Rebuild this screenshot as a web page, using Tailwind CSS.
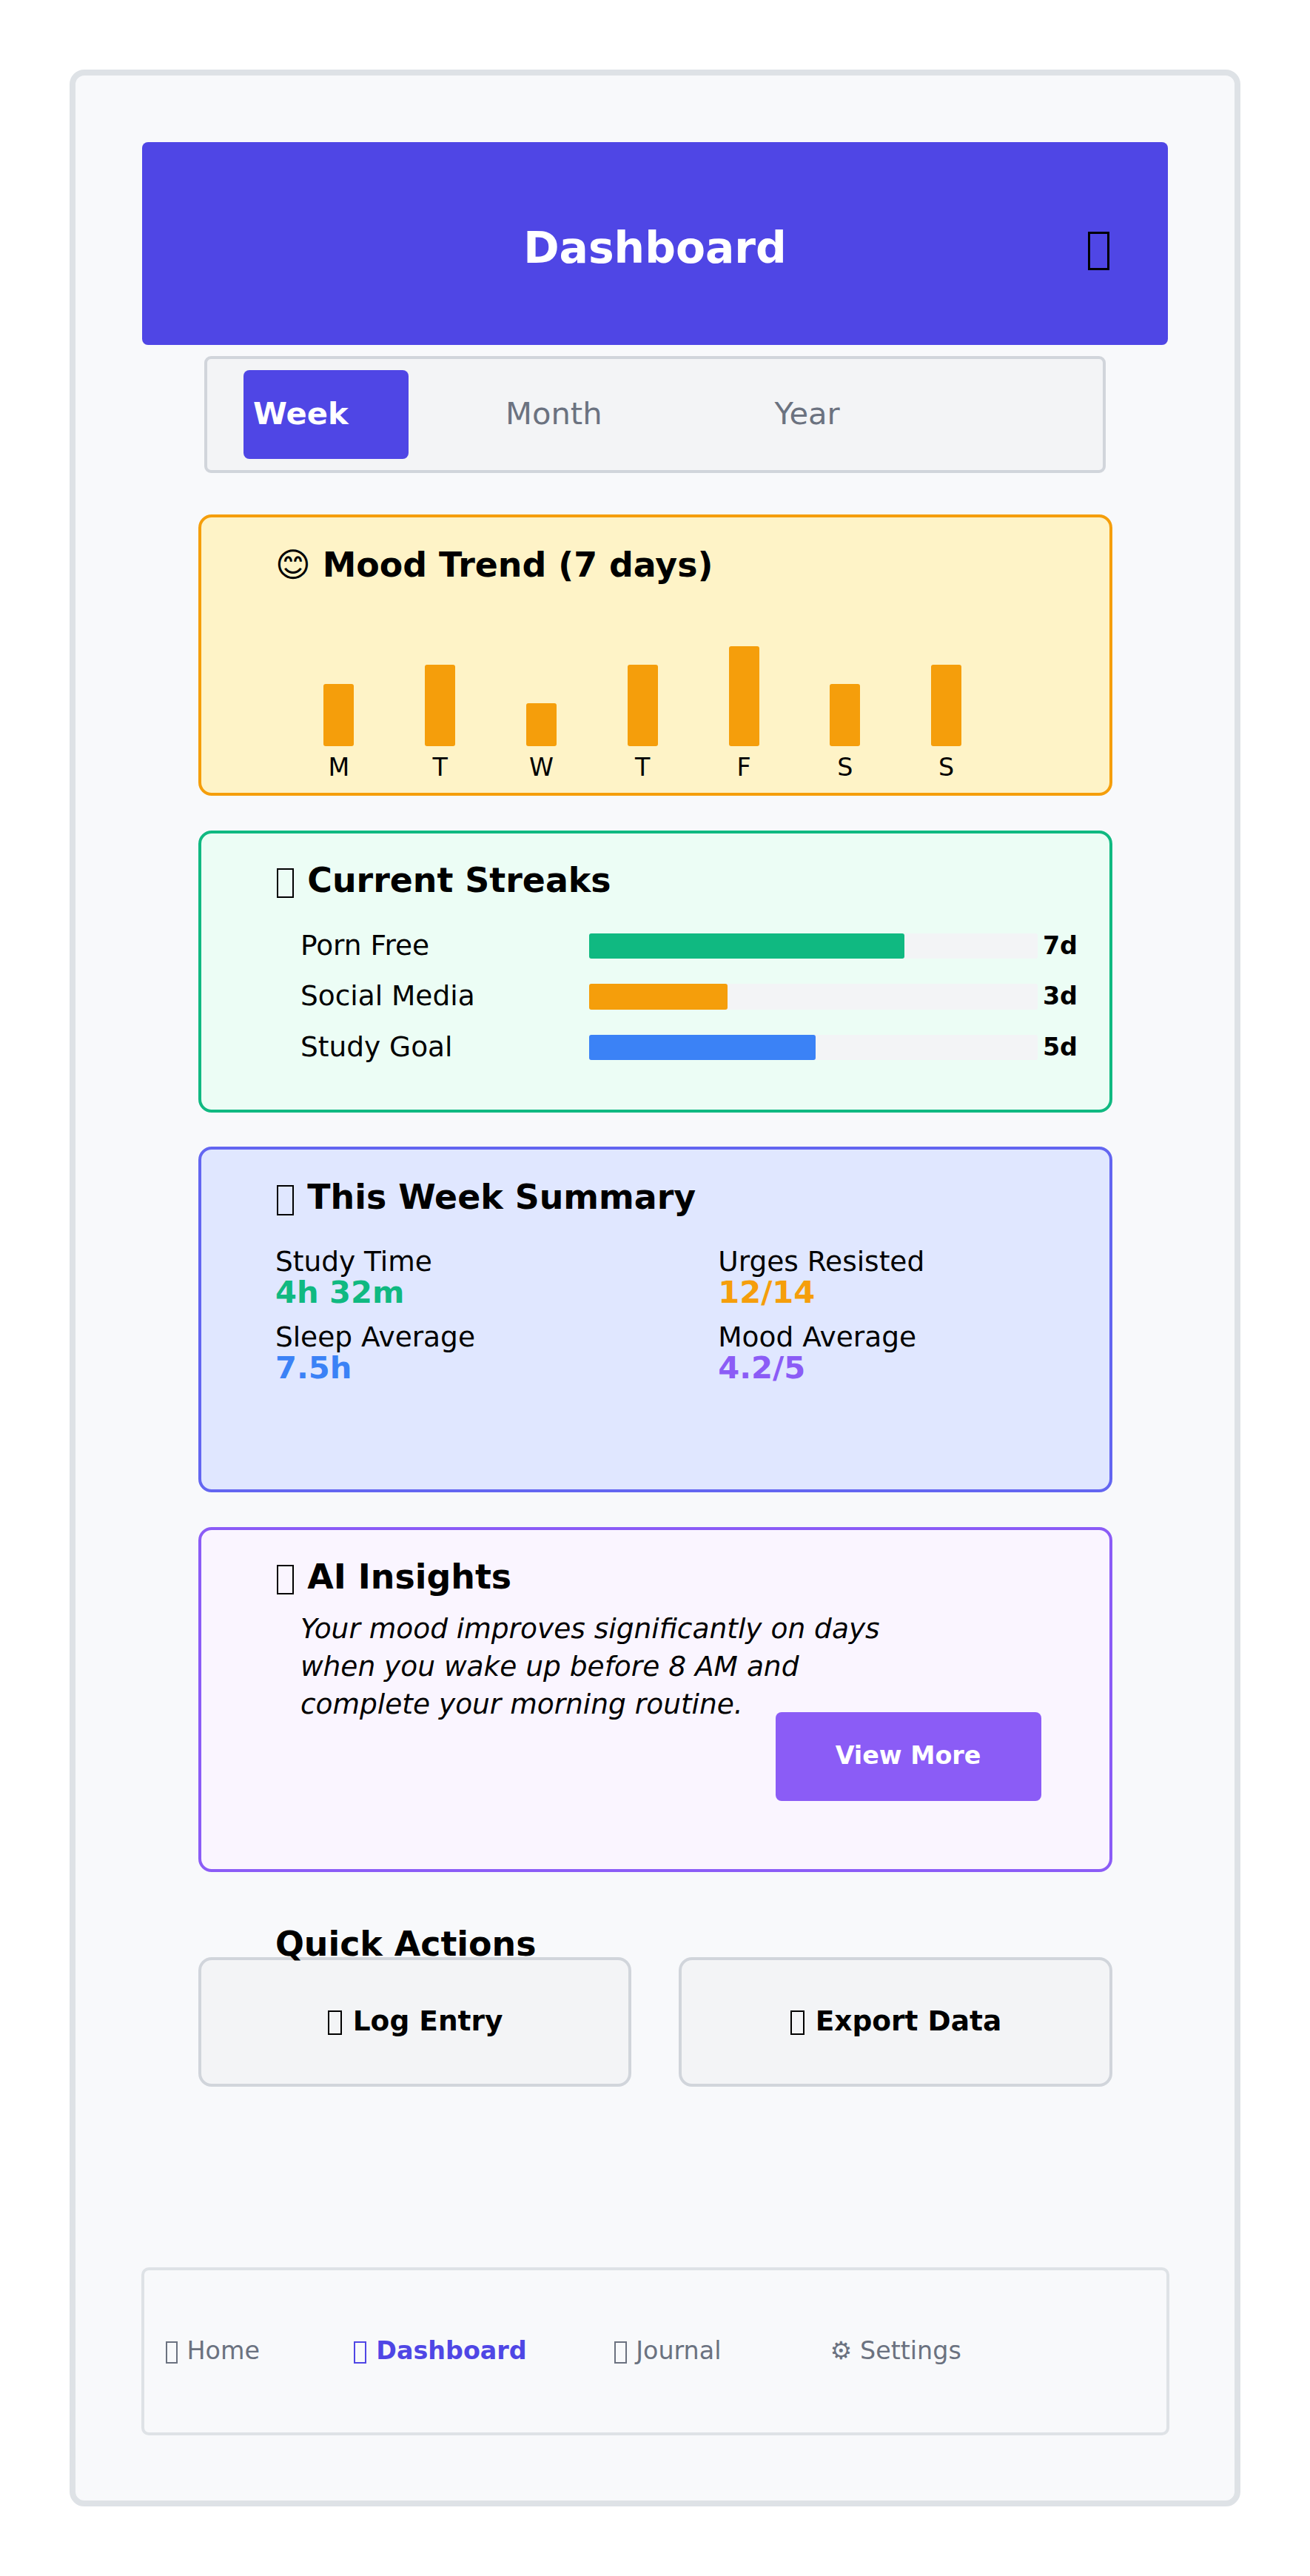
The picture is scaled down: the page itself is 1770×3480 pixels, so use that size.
<!DOCTYPE html>
<html lang="en">
<head>
<meta charset="utf-8">
<title>Dashboard</title>
<script src="https://cdn.jsdelivr.net/npm/@tailwindcss/browser@4"></script>
</head>
<body class="bg-white font-['DejaVu_Sans',sans-serif] text-black">
<main class="mx-[94px] mt-[94px] flex h-[3292px] w-[1582px] flex-col items-center rounded-[20px] border-8 border-[#dee2e6] bg-[#f8f9fb] pt-[90.4px] whitespace-nowrap">

  <header class="grid h-[274px] w-[1385.5px] shrink-0 grid-cols-[1fr_auto_1fr] items-center rounded-[8px] bg-[#4f46e5] pt-[11px] text-[58.33px] leading-none">
    <h1 class="col-start-2 font-bold text-white">Dashboard</h1>
    <span class="justify-self-end pr-[76px]"><span class="mr-[0.048em] ml-[0.05em] inline-block h-[0.882em] w-[0.502em] border-[3px] border-current align-[-0.177em]"></span></span>
  </header>

  <div class="mt-[15px] flex h-[158px] w-[1218px] shrink-0 items-center rounded-[9px] border-4 border-[#d1d5db] bg-[#f3f4f6] pl-[49px] text-[41.67px] text-[#6b7280]">
    <div class="flex h-[120px] w-[223px] items-center rounded-[8px] bg-[#4f46e5] pb-[3px] pl-[13px] font-bold text-white">Week</div>
    <div class="ml-[131px] w-[363.5px] pb-[3px]">Month</div>
    <div class="pb-[3px]">Year</div>
  </div>

  <section class="mt-[55.3px] h-[380.3px] w-[1235px] shrink-0 rounded-[18px] border-4 border-[#f59e0b] bg-[#fef3c7] pt-[40.3px] pl-[100.4px]">
    <h2 class="text-[45.83px] leading-[48px] font-bold"><span class="font-normal">😊</span> Mood Trend (7 days)</h2>
    <div class="flex h-[269.7px] items-end gap-[95.8px] pl-[65.5px] text-[33.33px] leading-[40px]">
      <div class="flex w-[41px] flex-col items-center"><div class="h-[84px] w-full rounded-[3px] bg-[#f59e0b]"></div><span class="mt-[9px]">M</span></div>
      <div class="flex w-[41px] flex-col items-center"><div class="h-[110px] w-full rounded-[3px] bg-[#f59e0b]"></div><span class="mt-[9px]">T</span></div>
      <div class="flex w-[41px] flex-col items-center"><div class="h-[58px] w-full rounded-[3px] bg-[#f59e0b]"></div><span class="mt-[9px]">W</span></div>
      <div class="flex w-[41px] flex-col items-center"><div class="h-[110px] w-full rounded-[3px] bg-[#f59e0b]"></div><span class="mt-[9px]">T</span></div>
      <div class="flex w-[41px] flex-col items-center"><div class="h-[135px] w-full rounded-[3px] bg-[#f59e0b]"></div><span class="mt-[9px]">F</span></div>
      <div class="flex w-[41px] flex-col items-center"><div class="h-[84px] w-full rounded-[3px] bg-[#f59e0b]"></div><span class="mt-[9px]">S</span></div>
      <div class="flex w-[41px] flex-col items-center"><div class="h-[110px] w-full rounded-[3px] bg-[#f59e0b]"></div><span class="mt-[9px]">S</span></div>
    </div>
  </section>

  <section class="mt-[47px] h-[381px] w-[1235px] shrink-0 rounded-[18px] border-4 border-[#10b981] bg-[#ecfdf5] pt-[39px] pl-[100.4px]">
    <h2 class="h-[48px] text-[45.83px] leading-[48px] font-bold"><span class="mr-[0.048em] ml-[0.05em] inline-block h-[0.882em] w-[0.502em] border-2 border-current align-[-0.177em]"></span> Current Streaks</h2>
    <div class="mt-[48px] flex flex-col gap-[33.9px] pl-[34px] text-[37.5px] leading-[33px]">
      <div class="flex h-[34.5px]"><span class="w-[390.5px]">Porn Free</span><div class="w-[605.5px] rounded-[3px] bg-[#f3f4f6]"><div class="h-full w-[426px] rounded-[3px] bg-[#10b981]"></div></div><span class="ml-[7px] text-[33.33px] font-bold">7d</span></div>
      <div class="flex h-[34.5px]"><span class="w-[390.5px]">Social Media</span><div class="w-[605.5px] rounded-[3px] bg-[#f3f4f6]"><div class="h-full w-[186.5px] rounded-[3px] bg-[#f59e0b]"></div></div><span class="ml-[7px] text-[33.33px] font-bold">3d</span></div>
      <div class="flex h-[34.5px]"><span class="w-[390.5px]">Study Goal</span><div class="w-[605.5px] rounded-[3px] bg-[#f3f4f6]"><div class="h-full w-[306px] rounded-[3px] bg-[#3b82f6]"></div></div><span class="ml-[7px] text-[33.33px] font-bold">5d</span></div>
    </div>
  </section>

  <section class="mt-[46.5px] h-[466.5px] w-[1235px] shrink-0 rounded-[18px] border-4 border-[#6366f1] bg-[#e0e7ff] pt-[40px] pl-[100.4px]">
    <h2 class="h-[48px] text-[45.83px] leading-[48px] font-bold"><span class="mr-[0.048em] ml-[0.05em] inline-block h-[0.882em] w-[0.502em] border-2 border-current align-[-0.177em]"></span> This Week Summary</h2>
    <dl class="mt-[40.3px] grid grid-cols-[598.3px_auto] gap-y-[18px] text-[37.5px] leading-[44px]">
      <div><dt>Study Time</dt><dd class="text-[41.67px] leading-[40.6px] font-bold text-[#10b981]">4h 32m</dd></div>
      <div><dt>Urges Resisted</dt><dd class="text-[41.67px] leading-[39px] font-bold text-[#f59e0b]">12/14</dd></div>
      <div><dt>Sleep Average</dt><dd class="text-[41.67px] leading-[40.6px] font-bold text-[#3b82f6]">7.5h</dd></div>
      <div><dt>Mood Average</dt><dd class="text-[41.67px] leading-[39px] font-bold text-[#8b5cf6]">4.2/5</dd></div>
    </dl>
  </section>

  <section class="mt-[46.6px] flex h-[466.5px] w-[1235px] shrink-0 flex-col rounded-[18px] border-4 border-[#8b5cf6] bg-[#faf5ff] pt-[39.6px] pl-[100.4px]">
    <h2 class="h-[48px] text-[45.83px] leading-[48px] font-bold"><span class="mr-[0.048em] ml-[0.05em] inline-block h-[0.882em] w-[0.502em] border-2 border-current align-[-0.177em]"></span> AI Insights</h2>
    <p class="mt-[20.6px] pl-[34px] text-[37.5px] leading-[51px] italic">Your mood improves significantly on days<br>when you wake up before 8 AM and<br>complete your morning routine.</p>
    <button class="mt-[-15px] mr-[92px] h-[120.7px] w-[359px] self-end rounded-[8px] bg-[#8b5cf6] pb-[3px] text-[33.33px] font-bold text-white">View More</button>
  </section>

  <h2 class="relative z-10 mt-[73px] w-[1235px] shrink-0 pl-[104.4px] text-[45.83px] leading-[48px] font-bold">Quick Actions</h2>
  <div class="mt-[-6.4px] grid h-[175.5px] w-[1235px] shrink-0 grid-cols-2 gap-[63.7px] text-[37.5px] font-bold">
    <button class="rounded-[18px] border-4 border-[#d1d5db] bg-[#f3f4f6] pb-[3px]"><span class="mr-[0.048em] ml-[0.05em] inline-block h-[0.882em] w-[0.502em] border-2 border-current align-[-0.177em]"></span> Log Entry</button>
    <button class="rounded-[18px] border-4 border-[#d1d5db] bg-[#f3f4f6] pb-[3px]"><span class="mr-[0.048em] ml-[0.05em] inline-block h-[0.882em] w-[0.502em] border-2 border-current align-[-0.177em]"></span> Export Data</button>
  </div>

  <nav class="mt-[243.5px] flex h-[227px] w-[1389px] shrink-0 items-center rounded-[10px] border-4 border-[#dee2e6] pb-[1px] pl-[27.5px] text-[33.33px] text-[#6b7280]">
    <a class="w-[254.8px]"><span class="mr-[0.048em] ml-[0.05em] inline-block h-[0.882em] w-[0.502em] border-2 border-current align-[-0.177em]"></span> Home</a>
    <a class="w-[351.8px] font-bold text-[#4f46e5]"><span class="mr-[0.048em] ml-[0.05em] inline-block h-[0.882em] w-[0.502em] border-2 border-current align-[-0.177em]"></span> Dashboard</a>
    <a class="w-[293px]"><span class="mr-[0.048em] ml-[0.05em] inline-block h-[0.882em] w-[0.502em] border-2 border-current align-[-0.177em]"></span> Journal</a>
    <a>⚙ Settings</a>
  </nav>
</main>
</body>
</html>
